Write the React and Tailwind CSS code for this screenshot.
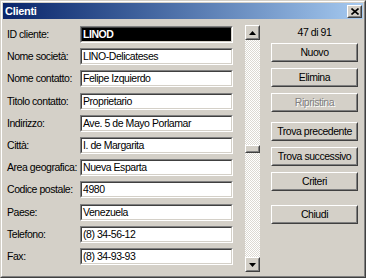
import React from "react";

const rows = [
  ["ID cliente:", "LINOD", true],
  ["Nome società:", "LINO-Delicateses"],
  ["Nome contatto:", "Felipe Izquierdo"],
  ["Titolo contatto:", "Proprietario"],
  ["Indirizzo:", "Ave. 5 de Mayo Porlamar"],
  ["Città:", "I. de Margarita"],
  ["Area geografica:", "Nueva Esparta"],
  ["Codice postale:", "4980"],
  ["Paese:", "Venezuela"],
  ["Telefono:", "(8) 34-56-12"],
  ["Fax:", "(8) 34-93-93"],
];

function Field({ value, selected }) {
  return (
    <div className="h-[17px] border border-t-[#808080] border-l-[#808080] border-b-white border-r-white">
      <div
        className={
          "h-full border border-t-[#404040] border-l-[#404040] border-b-[#d4d0c8] border-r-[#d4d0c8] pl-[1px] leading-[13px] whitespace-nowrap overflow-hidden " +
          (selected ? "bg-black text-white font-bold" : "bg-white text-black")
        }
      >
        {value}
      </div>
    </div>
  );
}

function Raised({ className = "", children }) {
  return (
    <div className={"border border-t-white border-l-white border-b-[#404040] border-r-[#404040] " + className}>
      <div className="h-full w-full border border-t-[#d4d0c8] border-l-[#d4d0c8] border-b-[#808080] border-r-[#808080] bg-[#d4d0c8] flex items-center justify-center">
        {children}
      </div>
    </div>
  );
}

function Btn({ label, disabled }) {
  return (
    <Raised className="w-[87px] h-[19px]">
      <span
        className={
          "leading-[13px] " +
          (disabled ? "text-[#808080] [text-shadow:1px_1px_0_#fff]" : "text-black")
        }
      >
        {label}
      </span>
    </Raised>
  );
}

function Arrow({ up }) {
  return (
    <svg width="7" height="4" viewBox="0 0 7 4">
      {up ? <polygon points="3.5,0 7,4 0,4" fill="#000" /> : <polygon points="0,0 7,0 3.5,4" fill="#000" />}
    </svg>
  );
}

export default function App() {
  return (
    <div className="w-[366px] h-[278px] border border-t-[#d4d0c8] border-l-[#d4d0c8] border-b-[#404040] border-r-[#404040] font-['Liberation_Sans',Arial,sans-serif] text-[10.5px] tracking-[-0.45px] text-black select-none">
      <div className="w-full h-full border border-t-white border-l-white border-b-[#808080] border-r-[#808080] bg-[#d4d0c8] p-[1px] flex flex-col">
        {/* Title bar */}
        <div className="h-[16px] bg-linear-to-r from-[#0a246a] to-[#a6caf0] flex items-center justify-between pl-[2px] pr-[1px]">
          <span className="text-white font-bold text-[11px] tracking-[-0.3px] leading-[16px]">Clienti</span>
          <Raised className="w-[15px] h-[13px]">
            <svg width="8" height="7" viewBox="0 0 8 7">
              <path d="M0.5 0.5 L7.5 6.5 M7.5 0.5 L0.5 6.5" stroke="#000" strokeWidth="1.6" />
            </svg>
          </Raised>
        </div>

        {/* Body */}
        <div className="flex items-start">
          <div className="ml-[4px] mt-[7px] grid grid-cols-[73px_153px] gap-y-[5.2px] items-center">
            {rows.map(([label, value, sel]) => (
              <React.Fragment key={label}>
                <div className="leading-[17px] whitespace-nowrap">{label}</div>
                <Field value={value} selected={sel} />
              </React.Fragment>
            ))}
          </div>

          {/* Scrollbar */}
          <div className="ml-[12px] mt-[6px] w-[15px] h-[247px] flex flex-col bg-[#ebe9e5] bg-[image:repeating-conic-gradient(#ffffff_0%_25%,#dcd9d2_0%_50%)] bg-[length:2px_2px]">
            <Raised className="w-[15px] h-[15px]">
              <Arrow up />
            </Raised>
            <div className="flex-1 flex flex-col">
              <Raised className="w-[15px] h-[8px] mt-[105px]" />
            </div>
            <Raised className="w-[15px] h-[15px]">
              <Arrow />
            </Raised>
          </div>

          {/* Buttons */}
          <div className="ml-[11px] mt-[5px] flex flex-col">
            <div className="w-[87px] h-[16px] leading-[16px] text-center">47 di 91</div>
            <div className="mt-[3px] flex flex-col gap-[6px]">
              <Btn label="Nuovo" />
              <Btn label="Elimina" />
              <Btn label="Ripristina" disabled />
            </div>
            <div className="mt-[10px] flex flex-col gap-[6px]">
              <Btn label="Trova precedente" />
              <Btn label="Trova successivo" />
              <Btn label="Criteri" />
            </div>
            <div className="mt-[14px]">
              <Btn label="Chiudi" />
            </div>
          </div>
        </div>
      </div>
    </div>
  );
}
